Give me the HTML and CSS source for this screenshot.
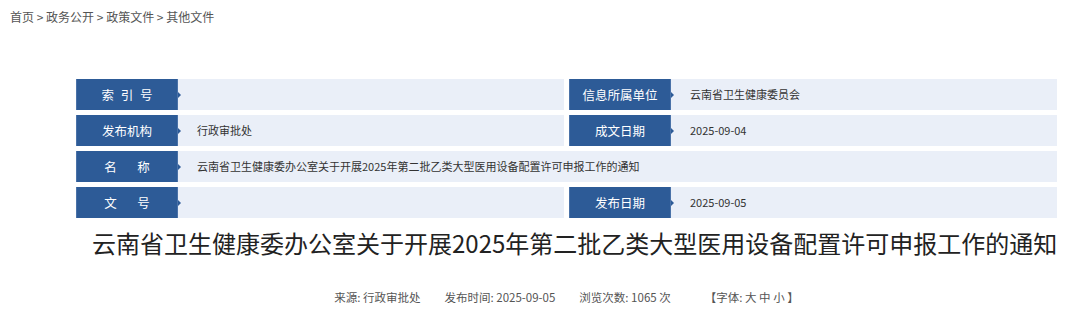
FILE: index.html
```html
<!DOCTYPE html>
<html>
<head>
<meta charset="utf-8">
<link rel="stylesheet" href="styles.css">
</head>
<body>

<div class="crumb">
    <a href="#">首页</a> &gt; <a href="#">政务公开</a> &gt; <a href="#">政策文件</a> &gt; <a href="#">其他文件</a>
</div>

<div class="page">
    <div class="info">
        <div class="row">
            <div class="cell">
                <div class="label spaced">索 引 号</div>
                <div class="value"></div>
            </div>
            <div class="cell">
                <div class="label">信息所属单位</div>
                <div class="value">云南省卫生健康委员会</div>
            </div>
        </div>
        <div class="row">
            <div class="cell">
                <div class="label">发布机构</div>
                <div class="value">行政审批处</div>
            </div>
            <div class="cell">
                <div class="label">成文日期</div>
                <div class="value">2025-09-04</div>
            </div>
        </div>
        <div class="row">
            <div class="cell">
                <div class="label wide">名　称</div>
                <div class="value">云南省卫生健康委办公室关于开展2025年第二批乙类大型医用设备配置许可申报工作的通知</div>
            </div>
        </div>
        <div class="row">
            <div class="cell">
                <div class="label wide">文　号</div>
                <div class="value"></div>
            </div>
            <div class="cell">
                <div class="label">发布日期</div>
                <div class="value">2025-09-05</div>
            </div>
        </div>
    </div>

    <h1 class="title">云南省卫生健康委办公室关于开展2025年第二批乙类大型医用设备配置许可申报工作的通知</h1>

    <div class="meta">
        <span>来源: 行政审批处</span>
        <span>发布时间: 2025-09-05</span>
        <span>浏览次数: 1065 次</span>
        <span class="size">【字体: <a href="#">大</a> <a href="#">中</a> <a href="#">小</a> 】</span>
    </div>
</div>

</body>
</html>
```

FILE: styles.css
```css
body {
    margin: 0;
    font-family: "Noto Sans CJK SC", "Noto Sans", sans-serif;
    color: #333;
    background-color: white;
}

a {
    color: inherit;
    text-decoration: none;
}

.crumb {
    padding: 7px 10px 0;
    height: 20px;
    font-size: 12px;
    line-height: 20px;
    color: #555;
}

.page {
    width: 981px;
    margin-left: 76px;
}

.info {
    margin-top: 52px;
    display: flex;
    flex-direction: column;
    gap: 5px;
}

.row {
    display: flex;
    gap: 5px;
}

.cell {
    flex: 1;
    display: flex;
    height: 31px;
}

.label {
    position: relative;
    width: 100px;
    flex: none;
    background-color: #2d5b97;
    color: white;
    font-size: 12.5px;
    line-height: 31px;
    text-align: center;
    border: 1px solid #4a72a8;
    border-width: 0 1px;
}

.label.spaced {
    letter-spacing: 2px;
    text-indent: 2px;
}

.label.wide {
    letter-spacing: 4px;
    text-indent: 4px;
}

/* small notch pointing into the value cell */
.label::after {
    content: "";
    position: absolute;
    right: -4px;
    top: 13px;
    border-left: 3px solid #2d5b97;
    border-top: 3px solid transparent;
    border-bottom: 3px solid transparent;
}

.value {
    flex: 1;
    background-color: #eaeff8;
    font-size: 11px;
    line-height: 31px;
    padding-left: 19px;
    white-space: nowrap;
}

.title {
    margin: 8px 0 0;
    padding-left: 16px;
    font-size: 24px;
    font-weight: normal;
    line-height: 34px;
    color: #222;
    text-align: center;
    white-space: nowrap;
}

.meta {
    margin-top: 28px;
    display: flex;
    justify-content: center;
    gap: 24px;
    font-size: 11.5px;
    line-height: 18px;
    color: #555;
}

.meta .size {
    margin-left: 10px;
}
```
